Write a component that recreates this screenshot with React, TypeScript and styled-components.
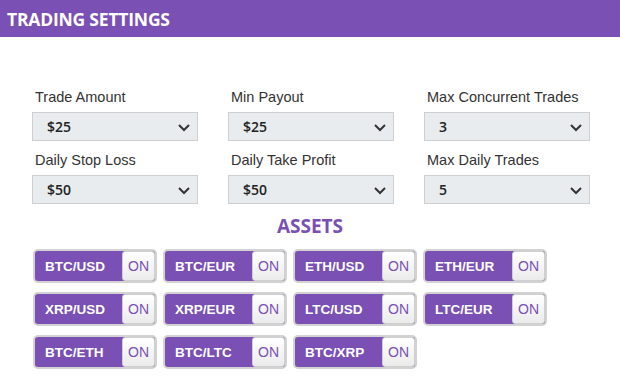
import styled, { createGlobalStyle } from 'styled-components';

const GlobalStyle = createGlobalStyle`
  html, body {
    margin: 0;
    padding: 0;
    background: #ffffff;
  }
  body {
    font-family: 'Liberation Sans', Arial, sans-serif;
  }
`;

const PURPLE = '#7a50b4';

const Page = styled.div`
  width: 620px;
  height: 380px;
  overflow: hidden;
  background: #fff;
`;

const Header = styled.header`
  height: 37px;
  background: ${PURPLE};
  display: flex;
  align-items: center;
  padding: 0 7px;
`;

const Title = styled.h1`
  margin: 0;
  color: #fff;
  font-family: 'Open Sans', sans-serif;
  font-weight: 700;
  font-size: 17.5px;
  letter-spacing: -0.2px;
`;

const Body = styled.div`
  padding: 50px 30px 0 32px;
`;

const FieldGrid = styled.div`
  display: grid;
  grid-template-columns: repeat(3, 166px);
  column-gap: 30px;
  row-gap: 9px;
`;

const Field = styled.div`
  display: flex;
  flex-direction: column;
`;

const Label = styled.label`
  font-size: 14.5px;
  line-height: 20px;
  color: #333;
  padding-left: 3px;
  margin-bottom: 5px;
`;

const Select = styled.div`
  box-sizing: border-box;
  height: 29px;
  background: #e9ecef;
  border: 1px solid #cfcfcf;
  display: flex;
  align-items: center;
  justify-content: space-between;
  padding: 0 6px 0 14px;
`;

const SelectValue = styled.span`
  font-family: 'Open Sans', sans-serif;
  font-weight: 600;
  font-size: 14px;
  color: #222;
`;

const Chevron = () => (
  <svg width="14" height="14" viewBox="0 0 14 14">
    <path d="M2 5 L7 10 L12 5" fill="none" stroke="#333" strokeWidth="2" />
  </svg>
);

const SectionTitle = styled.h2`
  margin: 9px 0 0;
  text-align: center;
  font-family: 'Open Sans', sans-serif;
  font-weight: 700;
  font-size: 19px;
  line-height: 26px;
  color: ${PURPLE};
  padding-right: 2px;
`;

const AssetList = styled.div`
  display: flex;
  flex-wrap: wrap;
  gap: 9px 6px;
  width: 520px;
  margin-top: 10px;
  padding-left: 1px;
`;

const Toggle = styled.div`
  box-sizing: border-box;
  width: 124px;
  height: 34px;
  border: 2px solid #d2d2d2;
  border-radius: 5px;
  background: ${PURPLE};
  display: flex;
  align-items: center;
  justify-content: space-between;
`;

const Pair = styled.span`
  color: #fff;
  font-weight: 700;
  font-size: 13.5px;
  padding-left: 10px;
`;

const OnBox = styled.span`
  box-sizing: border-box;
  width: 33px;
  height: 30px;
  border-radius: 3px;
  border: 1px solid #cfcfcf;
  background: linear-gradient(#ffffff, #ebebeb);
  display: flex;
  align-items: center;
  justify-content: center;
  color: ${PURPLE};
  font-size: 14px;
`;

const fields = [
  { label: 'Trade Amount', value: '$25' },
  { label: 'Min Payout', value: '$25' },
  { label: 'Max Concurrent Trades', value: '3' },
  { label: 'Daily Stop Loss', value: '$50' },
  { label: 'Daily Take Profit', value: '$50' },
  { label: 'Max Daily Trades', value: '5' },
];

const assets = [
  'BTC/USD', 'BTC/EUR', 'ETH/USD', 'ETH/EUR',
  'XRP/USD', 'XRP/EUR', 'LTC/USD', 'LTC/EUR',
  'BTC/ETH', 'BTC/LTC', 'BTC/XRP',
];

export default function App() {
  return (
    <Page>
      <GlobalStyle />
      <Header>
        <Title>TRADING SETTINGS</Title>
      </Header>
      <Body>
        <FieldGrid>
          {fields.map((f) => (
            <Field key={f.label}>
              <Label>{f.label}</Label>
              <Select>
                <SelectValue>{f.value}</SelectValue>
                <Chevron />
              </Select>
            </Field>
          ))}
        </FieldGrid>
        <SectionTitle>ASSETS</SectionTitle>
        <AssetList>
          {assets.map((a) => (
            <Toggle key={a}>
              <Pair>{a}</Pair>
              <OnBox>ON</OnBox>
            </Toggle>
          ))}
        </AssetList>
      </Body>
    </Page>
  );
}
